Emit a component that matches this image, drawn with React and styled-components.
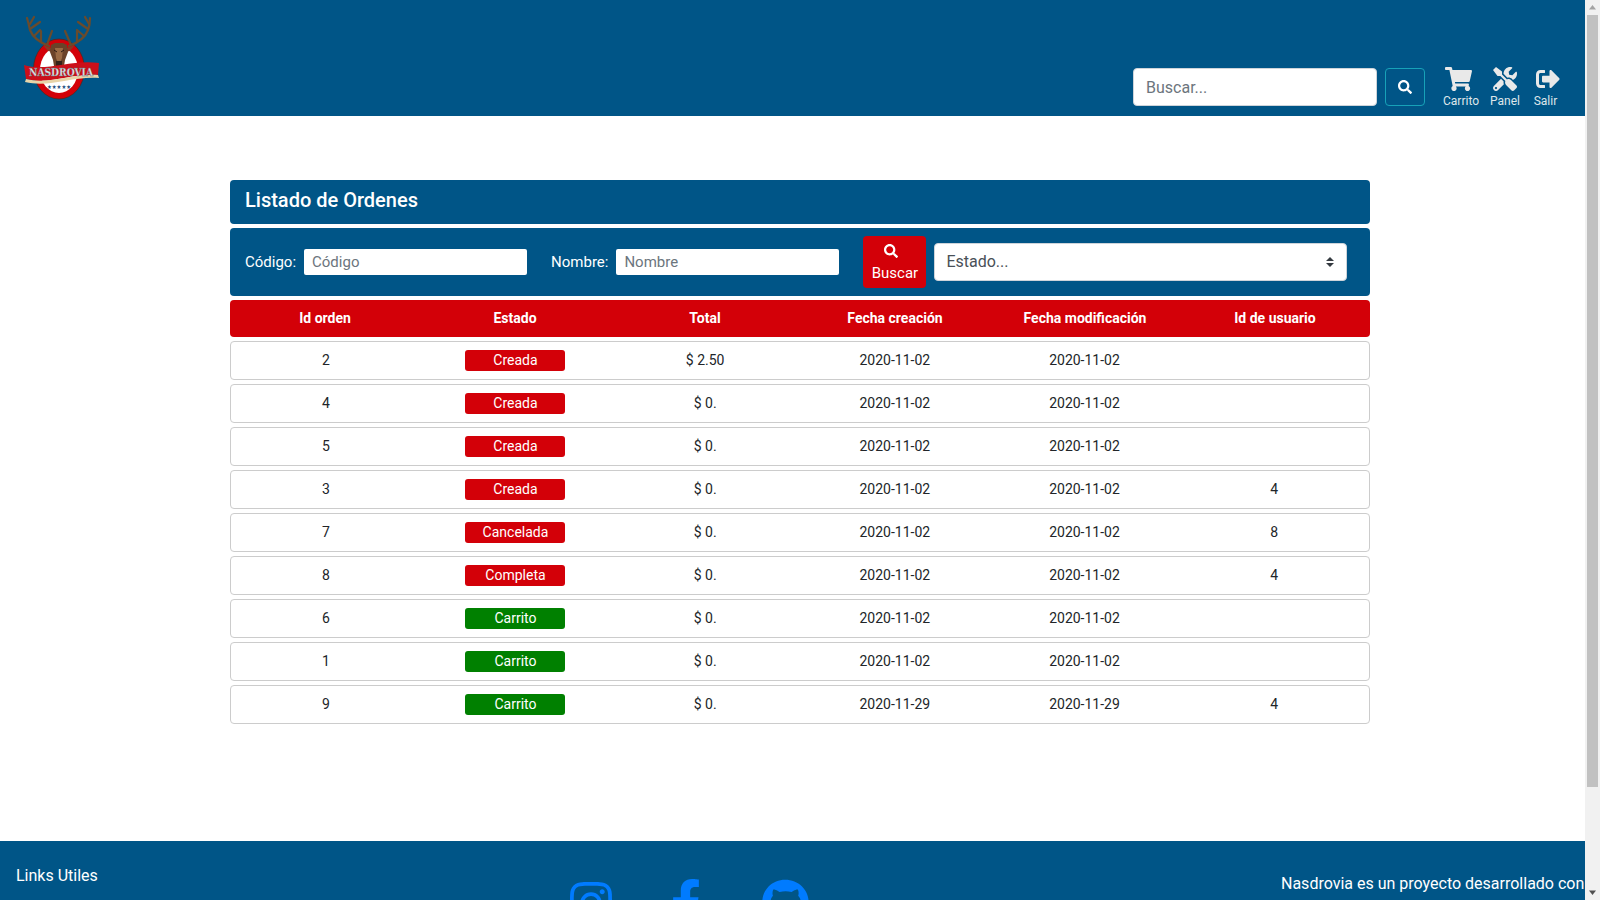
import styled, { createGlobalStyle } from 'styled-components'
import { FaSearch, FaShoppingCart, FaTools, FaSignOutAlt, FaInstagram, FaFacebookF, FaGithub } from 'react-icons/fa'

const blue = '#005587'
const red = '#d30008'

const orders = [
  { id: 2, estado: 'Creada', total: '$ 2.50', creada: '2020-11-02', modificada: '2020-11-02', usuario: '' },
  { id: 4, estado: 'Creada', total: '$ 0.', creada: '2020-11-02', modificada: '2020-11-02', usuario: '' },
  { id: 5, estado: 'Creada', total: '$ 0.', creada: '2020-11-02', modificada: '2020-11-02', usuario: '' },
  { id: 3, estado: 'Creada', total: '$ 0.', creada: '2020-11-02', modificada: '2020-11-02', usuario: '4' },
  { id: 7, estado: 'Cancelada', total: '$ 0.', creada: '2020-11-02', modificada: '2020-11-02', usuario: '8' },
  { id: 8, estado: 'Completa', total: '$ 0.', creada: '2020-11-02', modificada: '2020-11-02', usuario: '4' },
  { id: 6, estado: 'Carrito', total: '$ 0.', creada: '2020-11-02', modificada: '2020-11-02', usuario: '' },
  { id: 1, estado: 'Carrito', total: '$ 0.', creada: '2020-11-02', modificada: '2020-11-02', usuario: '' },
  { id: 9, estado: 'Carrito', total: '$ 0.', creada: '2020-11-29', modificada: '2020-11-29', usuario: '4' },
]

const columns = ['Id orden', 'Estado', 'Total', 'Fecha creación', 'Fecha modificación', 'Id de usuario']

const GlobalStyle = createGlobalStyle`
  * {
    box-sizing: border-box;
  }
  body {
    margin: 0;
    overflow-x: hidden;
    font-family: Roboto, "Liberation Sans", sans-serif;
    font-size: 14px;
    color: #212529;
    background: #fff;
  }
`

const Page = styled.div`
  width: 1600px;
`

// the browser scrollbar doesn't show up in the photo, so it's drawn over the page
const ScrollRail = styled.div`
  position: fixed;
  top: 0;
  right: 0;
  bottom: 0;
  width: 15px;
  background: #f1f1f1;
  display: flex;
  flex-direction: column;
  align-items: center;
`

const ScrollArrow = styled.svg`
  width: 15px;
  height: 15px;
  flex: none;
  display: block;
  &:last-child {
    margin-top: auto;
  }
`

const ScrollThumb = styled.div`
  width: 11px;
  height: 772px;
  background: #c1c1c1;
`

const Header = styled.header`
  height: 116px;
  background: ${blue};
  display: flex;
  align-items: flex-start;
  justify-content: space-between;
  padding: 0 40px 0 0;
`

const Logo = styled.svg`
  width: 130px;
  height: 116px;
  display: block;
`

const HeaderTools = styled.div`
  display: flex;
  align-items: flex-start;
  margin-top: 67px;
`

const SearchInput = styled.input`
  width: 244px;
  height: 38px;
  margin-top: 1px;
  padding: 6px 12px;
  border: 1px solid #ced4da;
  border-radius: 4px;
  font: 400 16px Roboto, sans-serif;
  color: #495057;
  &::placeholder {
    color: #6c757d;
  }
`

const SearchButton = styled.button`
  width: 40px;
  height: 38px;
  margin: 1px 18px 0 8px;
  display: flex;
  align-items: center;
  justify-content: center;
  background: transparent;
  border: 1px solid #17a2b8;
  border-radius: 4px;
  color: #fff;
  font-size: 14px;
`

const NavItem = styled.a`
  display: flex;
  flex-direction: column;
  align-items: center;
  margin-right: ${(props) => props.$gap}px;
  color: #dfe6ea;
  font-size: 12px;
  line-height: 14px;
  svg {
    width: ${(props) => props.$iconWidth}px;
    height: 24px;
    margin-bottom: 3px;
    margin-left: ${(props) => props.$iconShift}px;
    color: #e9e9e9;
  }
`

const Main = styled.main`
  width: 1140px;
  margin: 0 auto;
  padding: 64px 0 117px;
  display: flex;
  flex-direction: column;
`

const TitleBar = styled.div`
  height: 44px;
  background: ${blue};
  border-radius: 4px;
  padding: 0 15px 5px;
  display: flex;
  align-items: center;
  color: #fff;
  font-size: 20px;
  font-weight: 500;
`

const FilterBar = styled.form`
  height: 68px;
  margin: 4px 0;
  background: ${blue};
  border-radius: 4px;
  padding: 0 15px;
  display: flex;
  align-items: center;
`

const FilterLabel = styled.label`
  margin-right: 8px;
  color: #fff;
  font-size: 15px;
`

const FilterInput = styled.input`
  width: 223px;
  height: 26px;
  margin-right: 24px;
  padding: 0 8px;
  border: 0;
  border-radius: 2px;
  font: 400 15px Roboto, sans-serif;
  &::placeholder {
    color: #6c757d;
  }
`

const FilterButton = styled.button`
  width: 63px;
  height: 52px;
  flex: none;
  margin-right: 8px;
  padding: 1px 0 0;
  display: flex;
  flex-direction: column;
  align-items: center;
  justify-content: center;
  gap: 6px;
  background: ${red};
  border: 0;
  border-radius: 4px;
  color: #fff;
  font: 400 15px Roboto, sans-serif;
  line-height: 18px;
  svg {
    font-size: 14px;
    margin-right: 8px;
  }
`

const EstadoSelect = styled.select`
  width: 413px;
  height: 38px;
  padding: 4px 28px 6px 11px;
  appearance: none;
  border: 1px solid #ced4da;
  border-radius: 4px;
  font: 400 16px Roboto, sans-serif;
  color: #495057;
  background: #fff url("data:image/svg+xml,%3csvg xmlns='http://www.w3.org/2000/svg' width='4' height='5' viewBox='0 0 4 5'%3e%3cpath fill='%23343a40' d='M2 0L0 2h4zm0 5L0 3h4z'/%3e%3c/svg%3e") no-repeat right 12px center / 8px 10px;
`

const TableGrid = styled.div`
  display: grid;
  grid-template-columns: repeat(6, 1fr);
  align-items: center;
  justify-items: center;
`

const TableHead = styled(TableGrid)`
  height: 37px;
  margin-bottom: 4px;
  padding-bottom: 2px;
  background: ${red};
  border-radius: 4px;
  color: #fff;
  font-weight: 700;
`

const TableRow = styled(TableGrid)`
  height: 39px;
  margin-bottom: 4px;
  padding-bottom: 1px;
  background: #fff;
  border: 1px solid #ccc;
  border-radius: 4px;
  &:last-child {
    margin-bottom: 0;
  }
`

const Badge = styled.span`
  width: 100px;
  height: 21px;
  display: flex;
  align-items: center;
  justify-content: center;
  border-radius: 3px;
  color: #fff;
  background: ${(props) => (props.$estado === 'Carrito' ? '#008000' : red)};
`

const Footer = styled.footer`
  height: 173px;
  background: ${blue};
  color: #fff;
  font-size: 16px;
  display: grid;
  grid-template-columns: 533px 534px 533px;
`

const FooterLinks = styled.div`
  padding: 25px 16px;
  line-height: 19px;
`

const FooterIcons = styled.div`
  padding: 38px 0 0 37px;
  display: flex;
  align-items: flex-start;
  color: #007bff;
`

const SocialLink = styled.a`
  display: block;
  margin-right: ${(props) => props.$gap}px;
  line-height: 0;
  svg {
    width: ${(props) => props.$iconWidth}px;
    height: 48px;
  }
`

const FooterAbout = styled.p`
  margin: 0;
  padding: 33px 0 0 214px;
  line-height: 19px;
  white-space: nowrap;
`

function NasdroviaLogo() {
  return (
    <Logo viewBox="0 0 130 116" role="img" aria-label="Nasdrovia">
      <ellipse cx="59" cy="69" rx="25.5" ry="30" fill="#d30008" stroke="#4a2a1c" strokeWidth="0.7" />
      <ellipse cx="59" cy="70" rx="19" ry="23" fill="#fff" />
      <g fill="none" stroke="#6a4b2c" strokeWidth="2.2" strokeLinecap="round" strokeLinejoin="round">
        <path d="M49 46C41 43 33 38 30 30C29 25 28 21 27 18" />
        <path d="M30 29L40 22M30 24L34 17M34 36L40 30M41 42V31M47 45L52 31" />
        <path d="M69 46C77 43 85 38 88 30C90 25 90 21 90 18" />
        <path d="M88 29L78 22M89 24L85 17M84 36L77 30M77 42V31M71 45L65 31" />
      </g>
      <path d="M43 45L51 48H67L75 45L70 51L65 52H53L48 51Z" fill="#8a3a24" />
      <path d="M51 45L55 43H63L67 45L68 52L65 60L64 66H54L53 60L50 52Z" fill="#6b4228" />
      <path d="M55 48H63L62 58L60 63H58L56 58Z" fill="#9a6a44" />
      <path d="M54 50L57 52M64 50L61 52" stroke="#2b1a12" strokeWidth="1" />
      <path d="M56 61H62L62 66H56Z" fill="#33211a" />
      <path d="M24 65C46 72 72 59 99 63L98 75C72 73 50 85 26 79Z" fill="#cc0f1a" />
      <path d="M26 79C50 85 72 73 98 75L99 78C72 76 50 88 25 82Z" fill="#e8d4a8" />
      <text x="29" y="76" fontFamily="'DejaVu Serif', serif" fontWeight="700" fontSize="11" textLength="64" lengthAdjust="spacingAndGlyphs" fill="#dfe3e6" stroke="#5f6c76" strokeWidth="0.3">NASDROVIA</text>
      <text x="47" y="89" fontFamily="'DejaVu Sans', sans-serif" fontSize="6" textLength="24" lengthAdjust="spacingAndGlyphs" fill="#1f4f80">★★★★★</text>
    </Logo>
  )
}

export default function App() {
  return (
    <Page>
      <GlobalStyle />
      <Header>
        <NasdroviaLogo />
        <HeaderTools>
          <SearchInput placeholder="Buscar..." />
          <SearchButton aria-label="Buscar"><FaSearch /></SearchButton>
          <NavItem $gap={11} $iconWidth={27} $iconShift={-5}><FaShoppingCart />Carrito</NavItem>
          <NavItem $gap={11} $iconWidth={24} $iconShift={0}><FaTools />Panel</NavItem>
          <NavItem $gap={0} $iconWidth={24} $iconShift={5}><FaSignOutAlt />Salir</NavItem>
        </HeaderTools>
      </Header>
      <Main>
        <TitleBar>Listado de Ordenes</TitleBar>
        <FilterBar>
          <FilterLabel>Código:</FilterLabel>
          <FilterInput placeholder="Código" />
          <FilterLabel>Nombre:</FilterLabel>
          <FilterInput placeholder="Nombre" />
          <FilterButton type="button"><FaSearch />Buscar</FilterButton>
          <EstadoSelect defaultValue="">
            <option value="">Estado...</option>
          </EstadoSelect>
        </FilterBar>
        <TableHead>
          {columns.map((column) => <span key={column}>{column}</span>)}
        </TableHead>
        {orders.map((order) => (
          <TableRow key={order.id}>
            <span>{order.id}</span>
            <Badge $estado={order.estado}>{order.estado}</Badge>
            <span>{order.total}</span>
            <span>{order.creada}</span>
            <span>{order.modificada}</span>
            <span>{order.usuario}</span>
          </TableRow>
        ))}
      </Main>
      <Footer>
        <FooterLinks>Links Utiles</FooterLinks>
        <FooterIcons>
          <SocialLink $gap={59} $iconWidth={42}><FaInstagram /></SocialLink>
          <SocialLink $gap={61} $iconWidth={30}><FaFacebookF /></SocialLink>
          <SocialLink $gap={0} $iconWidth={47}><FaGithub /></SocialLink>
        </FooterIcons>
        <FooterAbout>Nasdrovia es un proyecto desarrollado con</FooterAbout>
      </Footer>
      <ScrollRail>
        <ScrollArrow viewBox="0 0 15 15"><path fill="#a3a3a3" d="M7.5 5L11 9.5H4z" /></ScrollArrow>
        <ScrollThumb />
        <ScrollArrow viewBox="0 0 15 15"><path fill="#505050" d="M4 5.5h7L7.5 10z" /></ScrollArrow>
      </ScrollRail>
    </Page>
  )
}
